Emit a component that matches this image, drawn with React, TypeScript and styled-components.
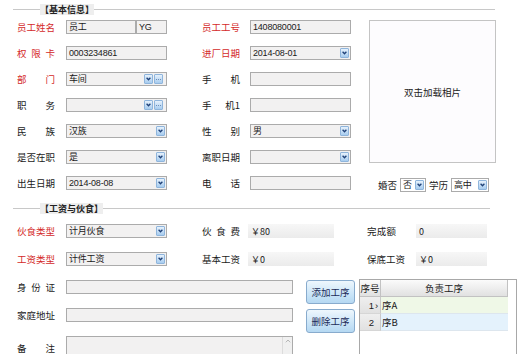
import styled, { createGlobalStyle } from 'styled-components'

const GlobalStyle = createGlobalStyle`
  html, body {
    margin: 0;
    padding: 0;
    background: #ffffff;
    overflow: hidden;
  }
  body {
    font-family: 'Noto Sans CJK SC', 'Liberation Sans', sans-serif;
    font-size: 9.5px;
    color: #1a1a1a;
  }
`

const Page = styled.div`
  width: 525px;
  height: 354px;
  padding-top: 4px;
  box-sizing: border-box;
`

const GroupHeader = styled.div<{ $width: number; $mt?: number }>`
  display: flex;
  align-items: center;
  margin-left: 13px;
  margin-top: ${p => p.$mt || 0}px;
  width: ${p => p.$width}px;
  height: 11px;
`

const Rule = styled.div<{ $fixed?: number }>`
  height: 1px;
  background: #c8c8c8;
  ${p => (p.$fixed ? `width: ${p.$fixed}px;` : 'flex: 1;')}
`

const GroupTitle = styled.span`
  font-size: 9px;
  font-weight: bold;
  line-height: 11px;
  color: #222;
  background: #eeeeee;
  white-space: nowrap;
`

const TopArea = styled.div`
  display: flex;
  margin-top: 5px;
  padding-left: 17px;
`

const Rows = styled.div<{ $gap: number }>`
  display: flex;
  flex-direction: column;
  gap: ${p => p.$gap}px;
`

const Row = styled.div<{ $h?: number; $top?: boolean }>`
  display: flex;
  align-items: ${p => (p.$top ? 'flex-start' : 'center')};
  height: ${p => p.$h || 14}px;
`

const Pair = styled.div<{ $ml?: number }>`
  display: flex;
  align-items: center;
  margin-left: ${p => p.$ml || 0}px;
`

const Label = styled.div<{ $red?: boolean; $w: number; $slot: number; $mt: number }>`
  display: flex;
  justify-content: space-between;
  width: ${p => p.$w}px;
  margin-right: ${p => p.$slot - p.$w}px;
  margin-top: ${p => p.$mt}px;
  flex-shrink: 0;
  color: ${p => (p.$red ? '#d42a2a' : '#1a1a1a')};
  white-space: nowrap;
  line-height: 14px;
`

const Field = styled.div<{ $w: number; $h?: number; $white?: boolean }>`
  box-sizing: border-box;
  display: flex;
  align-items: center;
  width: ${p => p.$w}px;
  height: ${p => p.$h || 14}px;
  border: 1px solid #ababab;
  background: ${p => (p.$white ? '#ffffff' : '#f2f1f1')};
  padding-left: 2px;
  font-family: 'Liberation Sans Narrow', 'Liberation Sans', 'Noto Sans CJK SC', sans-serif;
  font-size: 9px;
  letter-spacing: -0.2px;
  line-height: 12px;
  white-space: nowrap;
  overflow: hidden;
  flex-shrink: 0;
`

const FieldText = styled.span`
  flex: 1;
  overflow: hidden;
`

const DropBtn = styled.span<{ $mr: number }>`
  box-sizing: border-box;
  display: flex;
  align-items: center;
  justify-content: center;
  width: 9px;
  height: 10px;
  margin-right: ${p => p.$mr}px;
  border: 1px solid #8fb5dc;
  border-radius: 1px;
  background: linear-gradient(#e6f1fc, #a7ccef);
  flex-shrink: 0;
`

const MoreBtn = styled(DropBtn)`
  margin-left: 1px;
  gap: 1px;
`

const Dot = styled.i`
  width: 1px;
  height: 1px;
  background: #6f8fb8;
`

const MoneyField = styled.div<{ $w: number }>`
  box-sizing: border-box;
  display: flex;
  align-items: center;
  width: ${p => p.$w}px;
  height: 14px;
  padding-left: 3px;
  background: linear-gradient(#f7f7f7, #ebebeb);
  font-size: 9px;
  white-space: nowrap;
`

const PhotoCol = styled.div`
  display: flex;
  flex-direction: column;
  margin-left: 18px;
`

const PhotoBox = styled.div`
  box-sizing: border-box;
  display: flex;
  align-items: center;
  justify-content: center;
  width: 127px;
  height: 143px;
  border: 1px solid #c4c4c4;
  background: #fdfcfe;
  font-size: 9.5px;
`

const MiniRow = styled.div`
  display: flex;
  align-items: center;
  height: 14px;
  margin-top: 15px;
  padding-left: 9px;
  gap: 3px;
  white-space: nowrap;
`

const SalaryArea = styled.div`
  margin-top: 10px;
  padding-left: 17px;
`

const BottomArea = styled.div`
  display: flex;
  margin-top: 14px;
`

const ButtonCol = styled.div`
  display: flex;
  flex-direction: column;
  gap: 5px;
  margin-left: 13px;
`

const ActionButton = styled.button`
  box-sizing: border-box;
  width: 49px;
  height: 24px;
  padding: 0;
  border: 1px solid #88abcd;
  border-radius: 3px;
  background: linear-gradient(#eef7fd, #cde6f8 55%, #b5d8f2);
  color: #1c2c58;
  font-family: 'Noto Sans CJK SC', sans-serif;
  font-size: 9.5px;
`

const Table = styled.div`
  box-sizing: border-box;
  width: 158px;
  height: 92px;
  margin-left: 4px;
  margin-top: -1px;
  border: 1px solid #a8a8a8;
  background: #ffffff;
`

const TRow = styled.div`
  display: flex;
  height: 17px;
`

const HeadCell = styled.div<{ $w: number }>`
  box-sizing: border-box;
  display: flex;
  align-items: center;
  justify-content: center;
  width: ${p => p.$w}px;
  border-right: 1px solid #c2c2c2;
  border-bottom: 1px solid #c2c2c2;
  background: linear-gradient(#fbfbfb, #e1e1e1);
  color: #222;
  font-size: 9.5px;
`

const RowHead = styled.div`
  box-sizing: border-box;
  display: flex;
  align-items: center;
  justify-content: flex-end;
  width: 21px;
  padding-right: 1px;
  border-right: 1px solid #c9c9c9;
  border-bottom: 1px solid #d6d6d6;
  background: linear-gradient(#efefef, #e1e1e1);
  font-family: 'Liberation Sans', sans-serif;
  font-size: 9.5px;
  gap: 1px;
`

const Marker = styled.span`
  width: 4px;
`

const Cell = styled.div<{ $bg: string }>`
  box-sizing: border-box;
  display: flex;
  align-items: center;
  width: 127px;
  padding-left: 1px;
  border-bottom: 1px solid #dde6ee;
  background: ${p => p.$bg};
  font-size: 9.5px;
`

const ScrollStrip = styled.div`
  box-sizing: border-box;
  display: flex;
  justify-content: center;
  width: 10px;
  height: 100%;
  margin-left: auto;
  padding-top: 2px;
  border-left: 1px solid #dcdcdc;
  background: #f0f0f0;
`

const Lbl = ({ text, red, w = 38, slot = 49, mt = 0 }: { text: string; red?: boolean; w?: number; slot?: number; mt?: number }) => {
  const parts = text.includes(' ') ? text.split(' ') : Array.from(text)
  return (
    <Label $red={red} $w={w} $slot={slot} $mt={mt}>
      {parts.map((p, i) => <span key={i}>{p}</span>)}
    </Label>
  )
}

const Chevron = () => (
  <svg width="5" height="4" viewBox="0 0 5 4">
    <polyline points="0.6,0.8 2.5,2.8 4.4,0.8" fill="none" stroke="#1f4178" strokeWidth="1.3" />
  </svg>
)

const Select = ({ w, value, more, white }: { w: number; value?: string; more?: boolean; white?: boolean }) => (
  <Field $w={w} $white={white}>
    <FieldText>{value}</FieldText>
    <DropBtn $mr={more ? 0 : 1}>
      <Chevron />
    </DropBtn>
    {more && (
      <MoreBtn $mr={3}>
        <Dot />
        <Dot />
        <Dot />
      </MoreBtn>
    )}
  </Field>
)

function App() {
  return (
    <Page>
      <GlobalStyle />

      <GroupHeader $width={482}>
        <Rule $fixed={27} />
        <GroupTitle>【基本信息】</GroupTitle>
        <Rule />
      </GroupHeader>

      <TopArea>
        <Rows $gap={12}>
          <Row>
            <Pair>
              <Lbl text="员工姓名" red />
              <Field $w={70}>员工</Field>
              <Field $w={31}>YG</Field>
            </Pair>
            <Pair $ml={35}>
              <Lbl text="员工工号" red slot={48} />
              <Field $w={101}>1408080001</Field>
            </Pair>
          </Row>
          <Row>
            <Pair>
              <Lbl text="权 限 卡" red />
              <Field $w={101}>0003234861</Field>
            </Pair>
            <Pair $ml={35}>
              <Lbl text="进厂日期" red slot={48} />
              <Select w={101} value="2014-08-01" />
            </Pair>
          </Row>
          <Row>
            <Pair>
              <Lbl text="部 门" red />
              <Select w={101} value="车间" more />
            </Pair>
            <Pair $ml={35}>
              <Lbl text="手 机" slot={48} />
              <Field $w={101} />
            </Pair>
          </Row>
          <Row>
            <Pair>
              <Lbl text="职 务" />
              <Select w={101} more />
            </Pair>
            <Pair $ml={35}>
              <Lbl text="手 机1" slot={48} />
              <Field $w={101} />
            </Pair>
          </Row>
          <Row>
            <Pair>
              <Lbl text="民 族" />
              <Select w={101} value="汉族" />
            </Pair>
            <Pair $ml={35}>
              <Lbl text="性 别" slot={48} />
              <Select w={101} value="男" />
            </Pair>
          </Row>
          <Row>
            <Pair>
              <Lbl text="是否在职" />
              <Select w={101} value="是" />
            </Pair>
            <Pair $ml={35}>
              <Lbl text="离职日期" slot={48} />
              <Select w={101} />
            </Pair>
          </Row>
          <Row>
            <Pair>
              <Lbl text="出生日期" />
              <Select w={101} value="2014-08-08" />
            </Pair>
            <Pair $ml={35}>
              <Lbl text="电 话" slot={48} />
              <Field $w={101} />
            </Pair>
          </Row>
        </Rows>

        <PhotoCol>
          <PhotoBox>双击加载相片</PhotoBox>
          <MiniRow>
            <span>婚否</span>
            <Select w={26} value="否" white />
            <span>学历</span>
            <Select w={38} value="高中" white />
          </MiniRow>
        </PhotoCol>
      </TopArea>

      <GroupHeader $width={477} $mt={11}>
        <Rule $fixed={27} />
        <GroupTitle>【工资与伙食】</GroupTitle>
        <Rule />
      </GroupHeader>

      <SalaryArea>
        <Rows $gap={14}>
          <Row>
            <Pair>
              <Lbl text="伙食类型" red />
              <Select w={101} value="计月伙食" />
            </Pair>
            <Pair $ml={35}>
              <Lbl text="伙 食 费" slot={46} />
              <MoneyField $w={86}>￥80</MoneyField>
            </Pair>
            <Pair $ml={33}>
              <Lbl text="完成额" w={29} />
              <MoneyField $w={71}>0</MoneyField>
            </Pair>
          </Row>
          <Row>
            <Pair>
              <Lbl text="工资类型" red />
              <Select w={101} value="计件工资" />
            </Pair>
            <Pair $ml={35}>
              <Lbl text="基本工资" slot={46} />
              <MoneyField $w={86}>￥0</MoneyField>
            </Pair>
            <Pair $ml={33}>
              <Lbl text="保底工资" />
              <MoneyField $w={71}>￥0</MoneyField>
            </Pair>
          </Row>
        </Rows>

        <BottomArea>
          <Rows $gap={14}>
            <Row>
              <Lbl text="身 份 证" />
              <Field $w={227} />
            </Row>
            <Row>
              <Lbl text="家庭地址" />
              <Field $w={227} />
            </Row>
            <Row $h={28} $top>
              <Lbl text="备 注" mt={5} />
              <Field $w={227} $h={28}>
                <ScrollStrip>
                  <svg width="6" height="4" viewBox="0 0 6 4">
                    <polyline points="0.8,3.3 3,1 5.2,3.3" fill="none" stroke="#b5b5b5" strokeWidth="1" />
                  </svg>
                </ScrollStrip>
              </Field>
            </Row>
          </Rows>

          <ButtonCol>
            <ActionButton>添加工序</ActionButton>
            <ActionButton>删除工序</ActionButton>
          </ButtonCol>

          <Table>
            <TRow>
              <HeadCell $w={21}>序号</HeadCell>
              <HeadCell $w={127}>负责工序</HeadCell>
            </TRow>
            <TRow>
              <RowHead>
                <span>1</span>
                <Marker>›</Marker>
              </RowHead>
              <Cell $bg="#eff8e7">序A</Cell>
            </TRow>
            <TRow>
              <RowHead>
                <span>2</span>
                <Marker />
              </RowHead>
              <Cell $bg="#e4f2fc">序B</Cell>
            </TRow>
          </Table>
        </BottomArea>
      </SalaryArea>
    </Page>
  )
}

export default App
